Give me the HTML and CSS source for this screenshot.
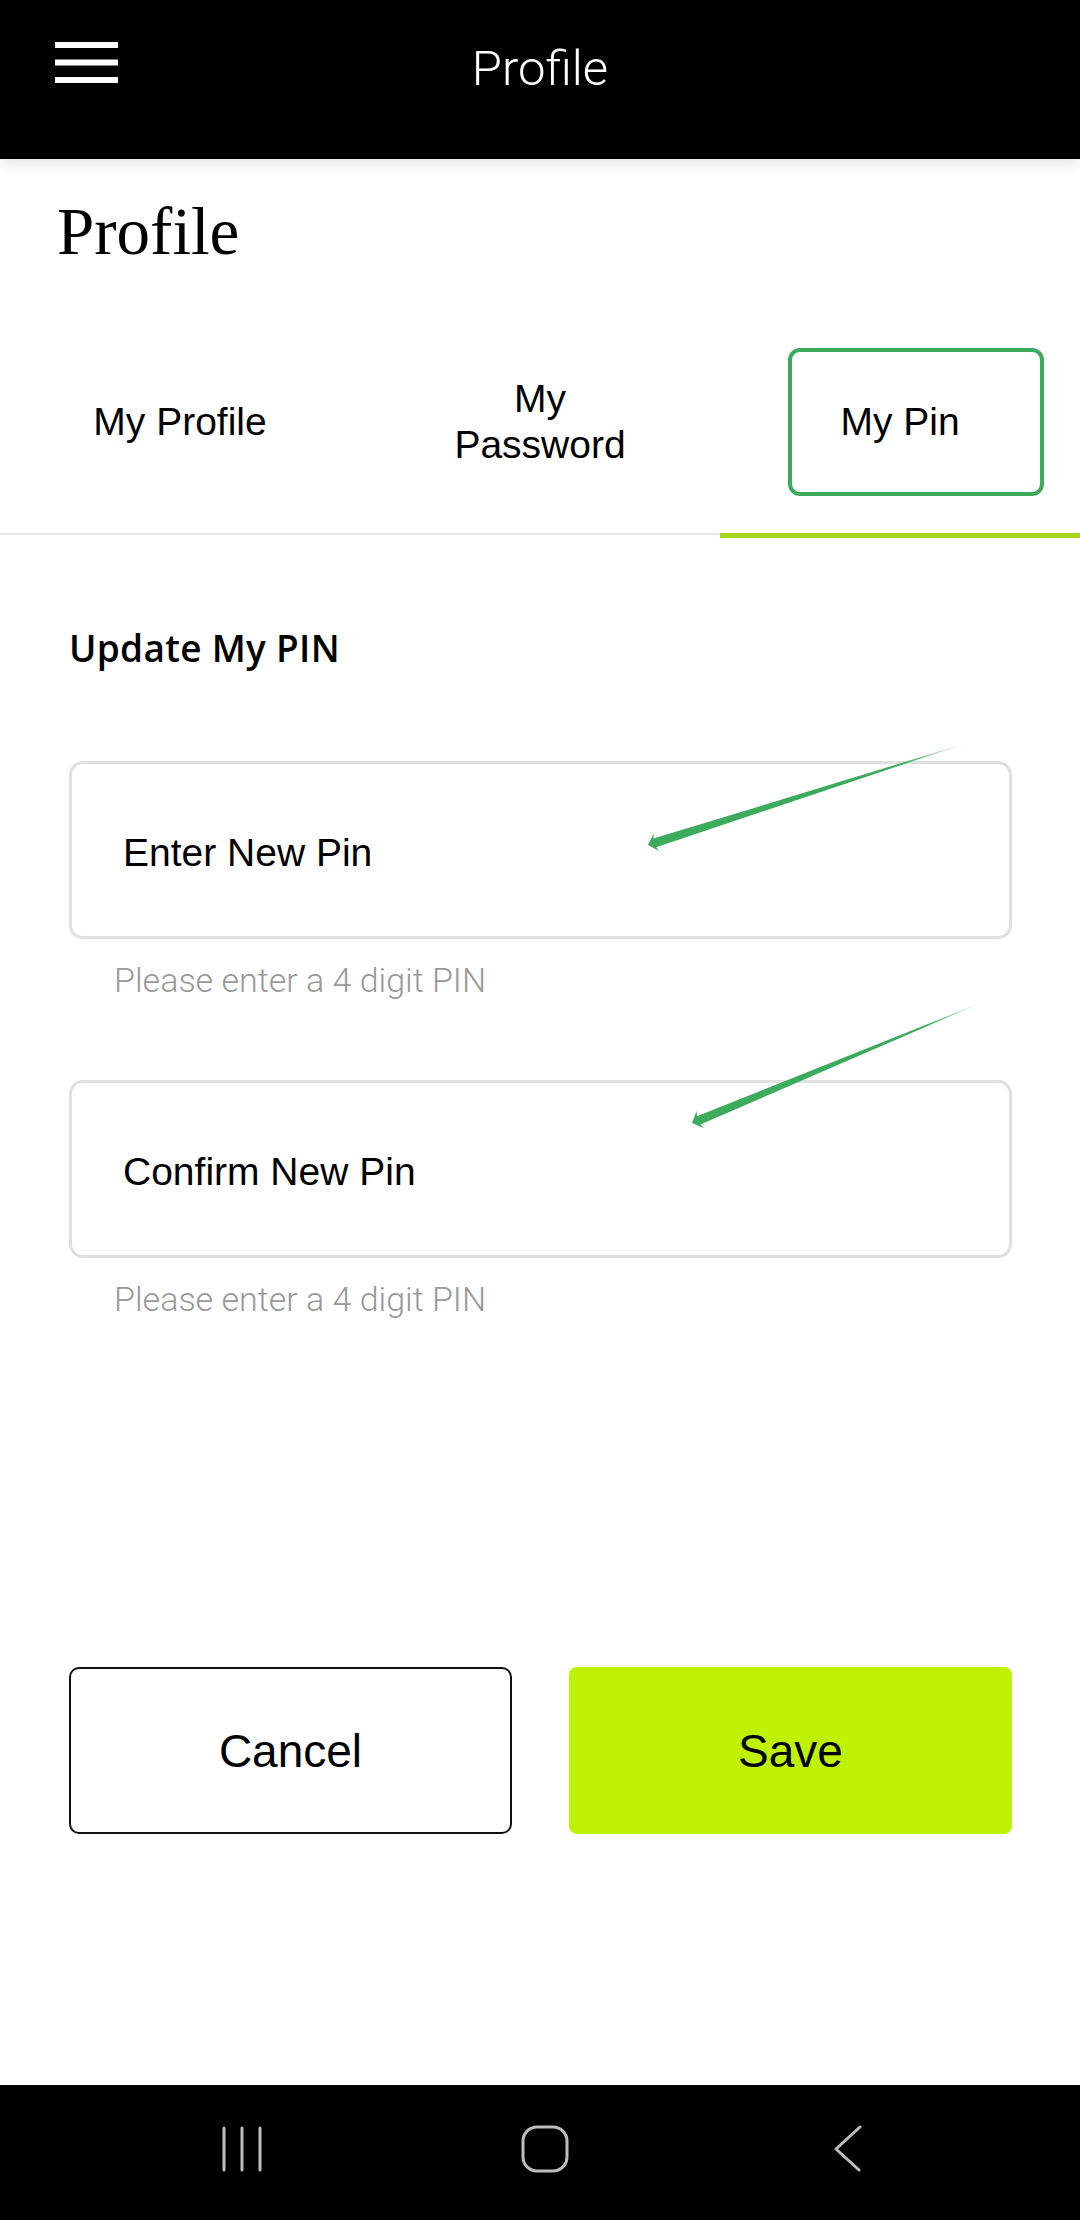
FILE: index.html
```html
<!DOCTYPE html>
<html lang="en">
<head>
    <meta charset="UTF-8">
    <meta name="viewport" content="width=device-width,initial-scale=1">
    <title>Profile - My Pin</title>
    <link rel="stylesheet" href="styles.css">
</head>
<body>
    <header class="topbar">
        <div class="menu-btn">
            <svg width="63" height="41" viewBox="0 0 63 41">
                <rect x="0" y="0" width="63" height="6" fill="#fff"/>
                <rect x="0" y="17.5" width="63" height="6" fill="#fff"/>
                <rect x="0" y="35" width="63" height="6" fill="#fff"/>
            </svg>
        </div>
        <div class="topbar-title">Profile</div>
        <div></div>
    </header>

    <main class="page">
        <h1 class="page-title">Profile</h1>

        <nav class="tabs">
            <div class="tab">My Profile</div>
            <div class="tab">My<br>Password</div>
            <div class="tab active">My Pin</div>
        </nav>

        <section class="pin-form">
            <h2>Update My PIN</h2>

            <div class="field">
                <div class="field-box">Enter New Pin</div>
                <div class="field-help">Please enter a 4 digit PIN</div>
            </div>

            <div class="field">
                <div class="field-box">Confirm New Pin</div>
                <div class="field-help">Please enter a 4 digit PIN</div>
            </div>

            <div class="actions">
                <button class="btn btn-cancel">Cancel</button>
                <button class="btn btn-save">Save</button>
            </div>
        </section>
    </main>

    <footer class="navbar">
        <svg width="42" height="46" viewBox="0 0 42 46">
            <g stroke="#bdbdbd" stroke-width="3" stroke-linecap="round">
                <line x1="3" y1="2" x2="3" y2="44"/>
                <line x1="21" y1="2" x2="21" y2="44"/>
                <line x1="39" y1="2" x2="39" y2="44"/>
            </g>
        </svg>
        <svg width="48" height="48" viewBox="0 0 48 48">
            <rect x="2" y="2" width="44" height="44" rx="14" fill="none" stroke="#bdbdbd" stroke-width="3"/>
        </svg>
        <svg width="30" height="48" viewBox="0 0 30 48">
            <polyline points="27,2 3,24 26,45" fill="none" stroke="#bdbdbd" stroke-width="3" stroke-linecap="round" stroke-linejoin="round"/>
        </svg>
    </footer>

    <!-- annotation marks drawn on top of the screenshot -->
    <div class="annotations">
        <div class="pin-highlight"></div>
        <svg class="arrows" width="1080" height="2220" viewBox="0 0 1080 2220">
            <defs>
                <linearGradient id="fade1" gradientUnits="userSpaceOnUse" x1="648" y1="845" x2="967" y2="743">
                    <stop offset="0.8" stop-color="#3dab5c"/>
                    <stop offset="1" stop-color="#3dab5c" stop-opacity="0.2"/>
                </linearGradient>
                <linearGradient id="fade2" gradientUnits="userSpaceOnUse" x1="692" y1="1123" x2="983" y2="1002">
                    <stop offset="0.8" stop-color="#3dab5c"/>
                    <stop offset="1" stop-color="#3dab5c" stop-opacity="0.2"/>
                </linearGradient>
            </defs>
            <polygon fill="url(#fade1)" points="648,845 653.7,833.2 653.4,838.6 967,743 656.1,847.2 659.5,851.3"/>
            <polygon fill="url(#fade2)" points="692,1123 696.7,1110.8 696.9,1116.2 983,1002 700.4,1124.5 704,1128.3"/>
        </svg>
    </div>
</body>
</html>
```

FILE: styles.css
```css
* {
    box-sizing: border-box;
}
body {
    margin: 0;
    width: 1080px;
    height: 2220px;
    background: #fff;
    color: #000;
    font-family: "Liberation Sans", Arial, sans-serif;
    display: flex;
    flex-direction: column;
    position: relative;
    overflow: hidden;
}

/* top bar */
.topbar {
    height: 159px;
    flex-shrink: 0;
    background: #000;
    display: grid;
    grid-template-columns: 1fr auto 1fr;
    align-items: start;
    padding: 0 55px;
    box-shadow: 0 5px 12px rgba(0,0,0,0.1);
    position: relative;
    z-index: 1;
}
.menu-btn {
    padding-top: 42px;
}
.menu-btn svg {
    display: block;
}
.topbar-title {
    font-family: Roboto, "Liberation Sans", sans-serif;
    font-weight: 300;
    font-size: 49px;
    line-height: 60px;
    color: #fff;
    padding-top: 39px;
}

/* page */
.page {
    flex: 1;
}
.page-title {
    font-family: "Liberation Serif", "Times New Roman", serif;
    font-weight: 400;
    font-size: 67px;
    line-height: 66px;
    margin: 39px 0 0 57px;
}

.tabs {
    margin-top: 47px;
    display: grid;
    grid-template-columns: repeat(3, 1fr);
    border-bottom: 2px solid #e3e7ea;
}
.tab {
    height: 222px;
    display: flex;
    align-items: center;
    justify-content: center;
    text-align: center;
    font-size: 39px;
    line-height: 46px;
    position: relative;
}
.tab.active::after {
    content: "";
    position: absolute;
    left: 0;
    right: 0;
    bottom: -5px;
    height: 5px;
    background: #a9d41a;
}

.pin-form {
    padding: 0 68px 0 69px;
}
.pin-form h2 {
    margin: 90px 0 0;
    font-family: "Open Sans", "Liberation Sans", sans-serif;
    font-weight: 600;
    font-size: 37px;
    line-height: 46px;
    letter-spacing: 0.3px;
}
.field {
    margin-top: 90px;
}
.field + .field {
    margin-top: 80px;
}
.field-box {
    height: 178px;
    border: 3px solid #e0e0e0;
    border-radius: 14px;
    padding: 5px 0 0 51px;
    display: flex;
    align-items: center;
    font-size: 39px;
    line-height: 46px;
}
.field-help {
    margin: 21px 0 0 45px;
    font-family: Roboto, "Liberation Sans", sans-serif;
    font-weight: 300;
    font-size: 34px;
    line-height: 40px;
    color: #999;
}

.actions {
    margin-top: 348px;
    display: grid;
    grid-template-columns: 1fr 1fr;
    gap: 57px;
}
.btn {
    height: 167px;
    font-family: "Liberation Sans", Arial, sans-serif;
    font-size: 46px;
    color: #000;
    border-radius: 10px;
    cursor: pointer;
}
.btn-cancel {
    background: #fff;
    border: 2px solid #111;
}
.btn-save {
    background: #bef202;
    border: none;
    border-radius: 8px;
}

/* system navigation */
.navbar {
    height: 135px;
    flex-shrink: 0;
    background: #000;
    display: grid;
    grid-template-columns: repeat(3, 303px);
    justify-items: center;
    align-items: center;
    padding: 0 0 7px 90px;
}
.navbar svg {
    display: block;
}

/* annotations */
.annotations {
    position: absolute;
    inset: 0;
    pointer-events: none;
}
.pin-highlight {
    position: absolute;
    left: 788px;
    top: 348px;
    width: 256px;
    height: 148px;
    border: 4px solid #3dab5c;
    border-radius: 12px;
}
.arrows {
    position: absolute;
    left: 0;
    top: 0;
}
```
